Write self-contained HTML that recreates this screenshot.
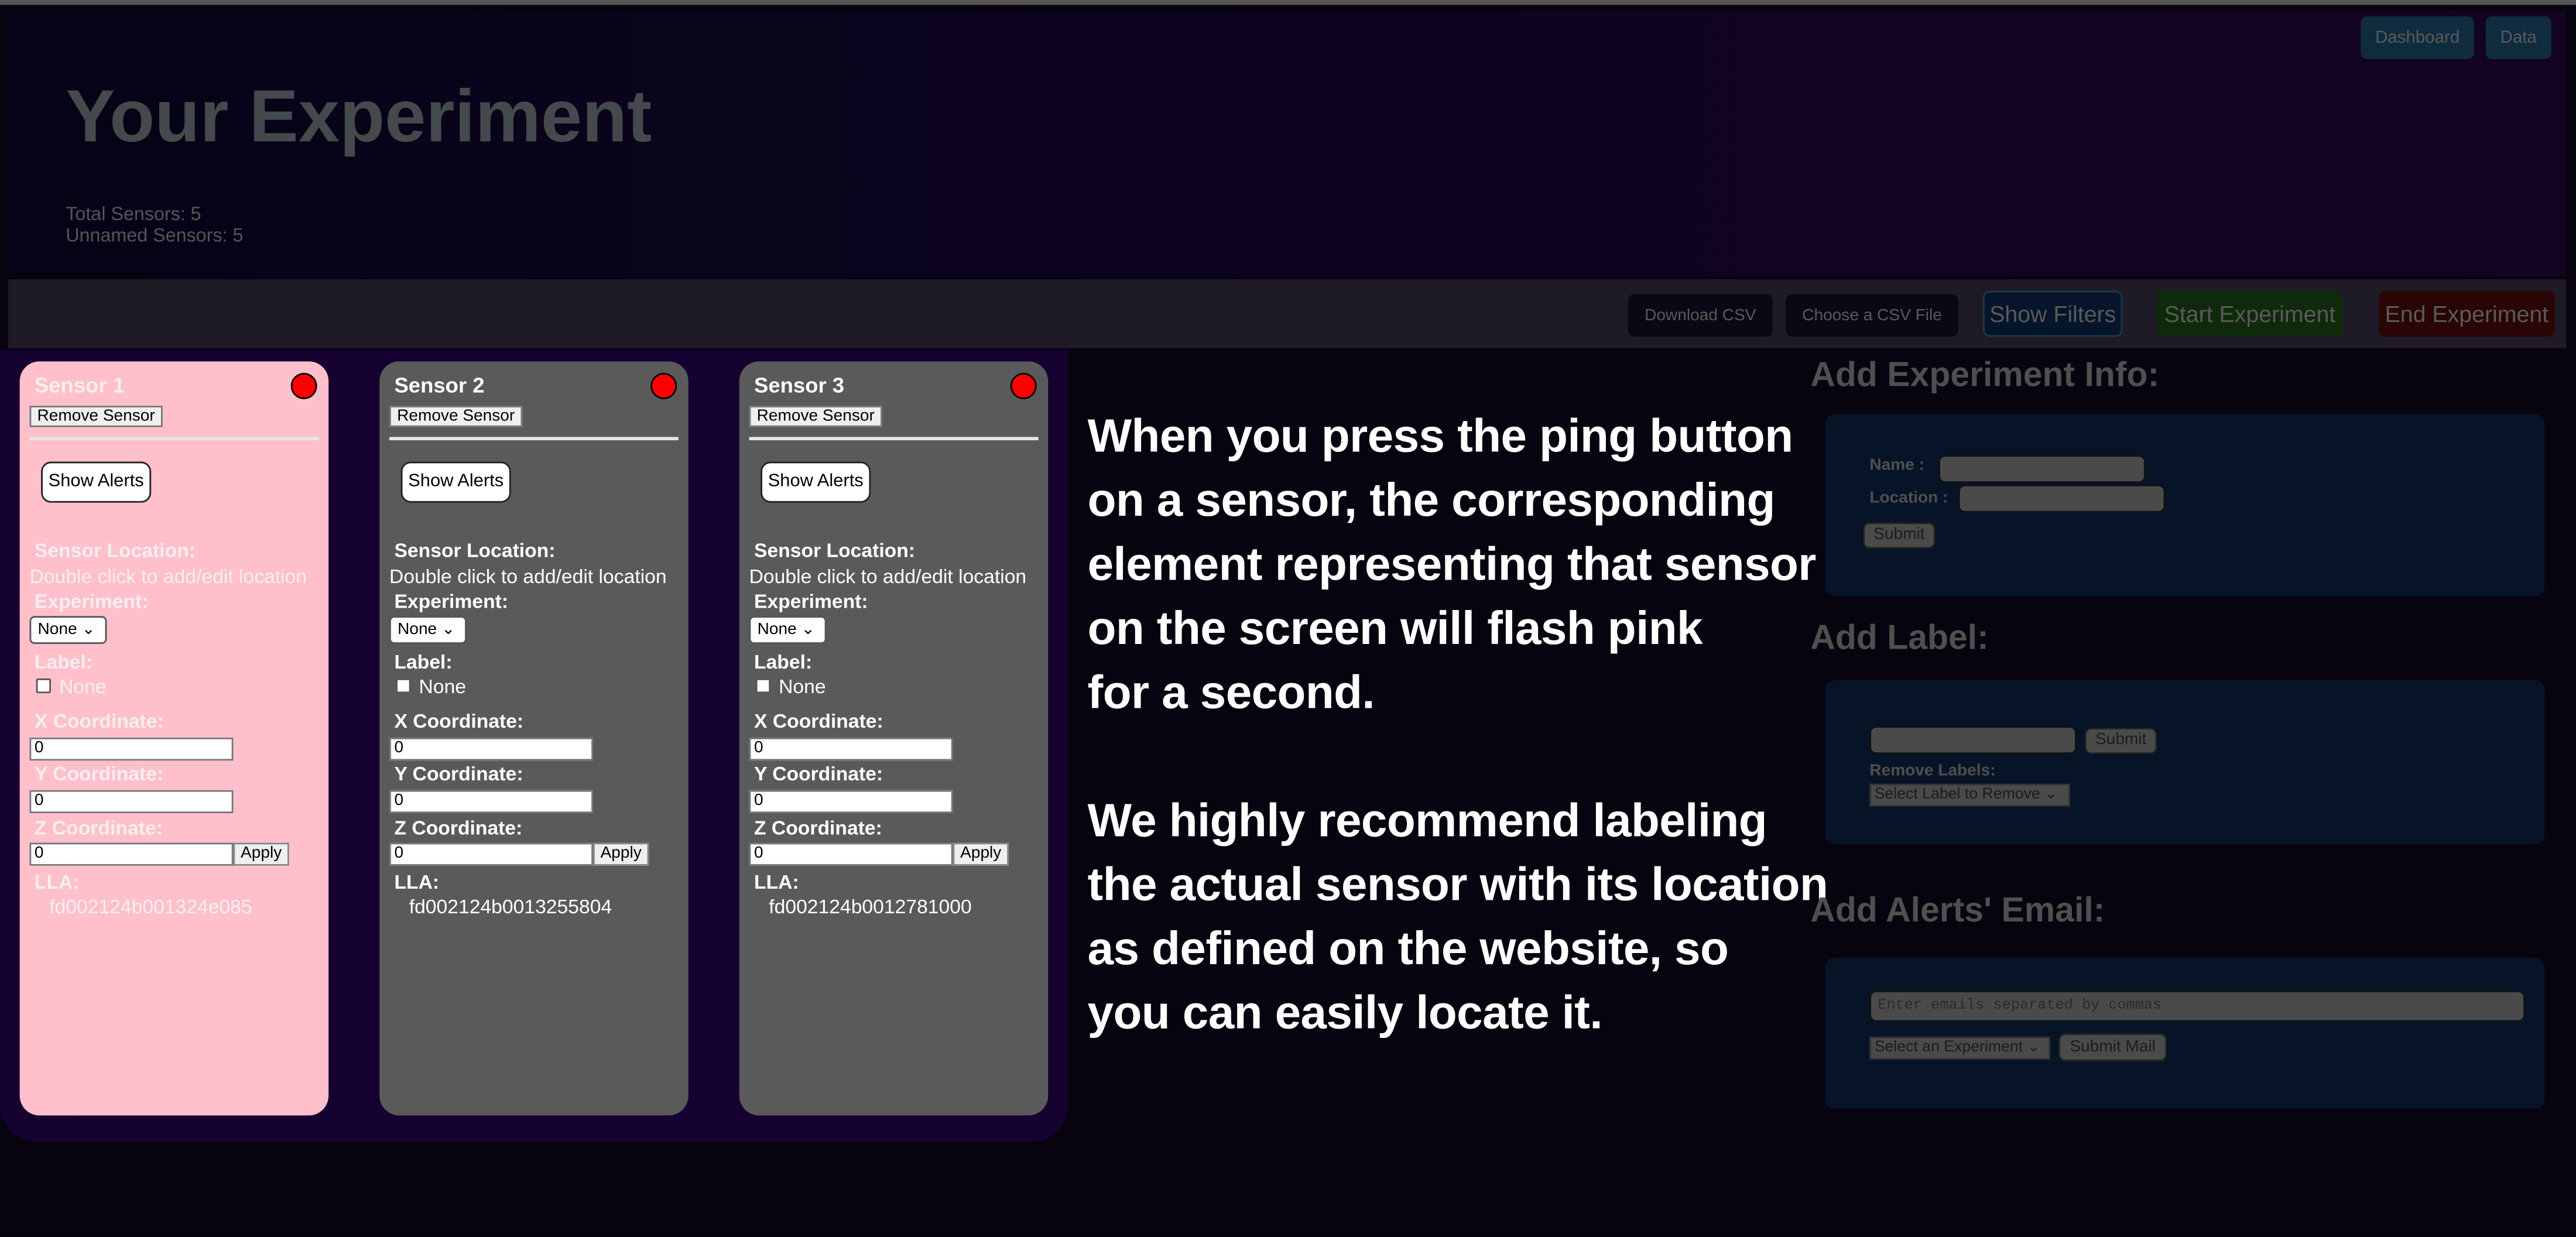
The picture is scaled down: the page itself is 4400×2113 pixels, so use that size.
<!DOCTYPE html>
<html><head><meta charset="utf-8"><style>
*{box-sizing:border-box;margin:0;padding:0}
html,body{width:4400px;height:2113px;overflow:hidden;background:#07030f}
#w{position:absolute;left:0;top:0;width:1568px;height:753px;transform:scale(2.8061);transform-origin:0 0;font-family:"Liberation Sans",sans-serif;background:#07030f}
.a{position:absolute}
.hdr{left:5px;top:7px;width:1557px;height:161px;background:linear-gradient(90deg,#050316 0%,#0d0420 45%,#130421 100%)}
.tb{left:5px;top:170px;width:1557px;height:42px;background:#1e1b26}
.btn{position:absolute;border-radius:4px;color:#5a5a5a;font-size:10px;display:flex;align-items:center;justify-content:center}
.big{font-size:14px}
.cont{left:0;top:213px;width:650px;height:482px;background:#150230;border-radius:0 0 22px 22px}
.card{position:absolute;top:220px;width:188px;height:459px;border-radius:12px;color:#fff;font-size:12px}
.card .t{position:absolute;left:9px;top:7px;font-weight:bold;font-size:13px}
.dot{position:absolute;left:165px;top:7px;width:16px;height:16px;border-radius:50%;background:#f00;border:1px solid #000}
.rm{position:absolute;left:6px;top:27px;width:81px;height:13px;background:#efefef;border:1px solid #777;color:#000;font-size:10px;line-height:11px;text-align:center}
.hr{position:absolute;left:6px;top:46px;width:176px;height:2px;background:#e6e6e6}
.sa{position:absolute;left:13px;top:61px;width:67px;height:25px;background:#fff;border:1px solid #222;border-radius:6px;color:#000;font-size:11px;line-height:23px;text-align:center}
.l{position:absolute;left:9px;font-weight:bold;font-size:12px}
.n{position:absolute;left:6px;font-size:12px}
.sel{position:absolute;left:6px;top:155px;width:47px;height:17px;background:#fff;border:1px solid #555;border-radius:3px;color:#000;font-size:10px;padding-left:4px;line-height:15px}
.cb{position:absolute;left:10px;top:193px;width:9px;height:9px;background:#fff;border:1px solid #555;border-radius:1px}
.in{position:absolute;left:6px;width:124px;height:14px;background:#fff;border:1px solid #777;color:#000;font-size:10px;line-height:12px;padding-left:2px}
.ap{position:absolute;left:130px;top:293px;width:34px;height:14px;background:#efefef;border:1px solid #888;color:#000;font-size:10px;line-height:12px;text-align:center}
.txt{left:662px;color:#fff;font-weight:bold;font-size:28.5px;white-space:nowrap;letter-spacing:-0.2px}
.h{color:#4f4f4f;font-weight:bold;font-size:21px;left:1102px}
.box{left:1111px;width:438px;background:#071427;border-radius:6px}
.lb{color:#4f4f4f;font-size:10px;font-weight:bold;position:absolute}
.inp{position:absolute;background:#4a4a4a;border:1px solid #111;border-radius:4px}
.gb{position:absolute;background:#4a4a4a;border:1px solid #222;border-radius:4px;color:#1c1c1c;font-size:10px;text-align:center}
.gs{position:absolute;background:#4a4a4a;border:1px solid #333;color:#1c1c1c;font-size:9.5px;padding-left:2px;white-space:nowrap}
</style></head><body><div id="w">
<div class="a" style="left:0;top:0;width:1568px;height:3px;background:#555"></div>
<div class="a hdr"></div>
<div class="a" style="left:40px;top:45px;font-size:45px;font-weight:bold;color:#444a4c">Your Experiment</div>
<div class="a" style="left:40px;top:125px;font-size:11.5px;color:#555;line-height:13px">Total Sensors: 5<br>Unnamed Sensors: 5</div>
<div class="btn" style="left:1437px;top:10px;width:69px;height:26px;background:#0f2c3f;font-size:10.5px">Dashboard</div>
<div class="btn" style="left:1513px;top:10px;width:40px;height:26px;background:#0f2c3f;font-size:10.5px">Data</div>
<div class="a tb"></div>
<div class="btn" style="left:991px;top:179px;width:88px;height:26px;background:#0a0814">Download CSV</div>
<div class="btn" style="left:1087px;top:179px;width:105px;height:26px;background:#0a0814">Choose a CSV File</div>
<div class="btn big" style="left:1207px;top:177px;width:85px;height:28px;background:#06152a;border:1px solid #1c3a4c">Show Filters</div>
<div class="btn big" style="left:1313px;top:177px;width:113px;height:28px;background:#0f2a0b">Start Experiment</div>
<div class="btn big" style="left:1448px;top:177px;width:107px;height:28px;background:#2a0505">End Experiment</div>
<div class="a cont"></div>

<div class="card" style="left:12px;background:#ffc0cb;color:#f6eeee">
<div class="t">Sensor 1</div><div class="dot"></div><div class="rm">Remove Sensor</div><div class="hr"></div><div class="sa">Show Alerts</div>
<div class="l" style="top:108px">Sensor Location:</div><div class="n" style="top:124px">Double click to add/edit location</div>
<div class="l" style="top:139px">Experiment:</div><div class="sel">None ⌄</div>
<div class="l" style="top:176px">Label:</div><div class="cb"></div><div class="n" style="left:24px;top:191px">None</div>
<div class="l" style="top:212px">X Coordinate:</div><div class="in" style="top:229px">0</div>
<div class="l" style="top:244px">Y Coordinate:</div><div class="in" style="top:261px">0</div>
<div class="l" style="top:277px">Z Coordinate:</div><div class="in" style="top:293px">0</div><div class="ap">Apply</div>
<div class="l" style="top:310px">LLA:</div><div class="n" style="left:18px;top:325px">fd002124b001324e085</div>
</div>
<div class="card" style="left:231px;background:#5a5a5a">
<div class="t">Sensor 2</div><div class="dot"></div><div class="rm">Remove Sensor</div><div class="hr"></div><div class="sa">Show Alerts</div>
<div class="l" style="top:108px">Sensor Location:</div><div class="n" style="top:124px">Double click to add/edit location</div>
<div class="l" style="top:139px">Experiment:</div><div class="sel">None ⌄</div>
<div class="l" style="top:176px">Label:</div><div class="cb"></div><div class="n" style="left:24px;top:191px">None</div>
<div class="l" style="top:212px">X Coordinate:</div><div class="in" style="top:229px">0</div>
<div class="l" style="top:244px">Y Coordinate:</div><div class="in" style="top:261px">0</div>
<div class="l" style="top:277px">Z Coordinate:</div><div class="in" style="top:293px">0</div><div class="ap">Apply</div>
<div class="l" style="top:310px">LLA:</div><div class="n" style="left:18px;top:325px">fd002124b0013255804</div>
</div>
<div class="card" style="left:450px;background:#5a5a5a">
<div class="t">Sensor 3</div><div class="dot"></div><div class="rm">Remove Sensor</div><div class="hr"></div><div class="sa">Show Alerts</div>
<div class="l" style="top:108px">Sensor Location:</div><div class="n" style="top:124px">Double click to add/edit location</div>
<div class="l" style="top:139px">Experiment:</div><div class="sel">None ⌄</div>
<div class="l" style="top:176px">Label:</div><div class="cb"></div><div class="n" style="left:24px;top:191px">None</div>
<div class="l" style="top:212px">X Coordinate:</div><div class="in" style="top:229px">0</div>
<div class="l" style="top:244px">Y Coordinate:</div><div class="in" style="top:261px">0</div>
<div class="l" style="top:277px">Z Coordinate:</div><div class="in" style="top:293px">0</div><div class="ap">Apply</div>
<div class="l" style="top:310px">LLA:</div><div class="n" style="left:18px;top:325px">fd002124b0012781000</div>
</div>

<div class="a txt" style="top:250px">When you press the ping button</div>
<div class="a txt" style="top:289px">on a sensor, the corresponding</div>
<div class="a txt" style="top:328px">element representing that sensor</div>
<div class="a txt" style="top:367px">on the screen will flash pink</div>
<div class="a txt" style="top:406px">for a second.</div>
<div class="a txt" style="top:484px">We highly recommend labeling</div>
<div class="a txt" style="top:523px">the actual sensor with its location</div>
<div class="a txt" style="top:562px">as defined on the website, so</div>
<div class="a txt" style="top:601px">you can easily locate it.</div>

<div class="a h" style="top:217px">Add Experiment Info:</div>
<div class="a box" style="top:252px;height:111px">
<div class="lb" style="left:27px;top:26px">Name :</div><div class="inp" style="left:69px;top:25px;width:126px;height:17px"></div>
<div class="lb" style="left:27px;top:46px">Location :</div><div class="inp" style="left:81px;top:43px;width:126px;height:17px"></div>
<div class="gb" style="left:23px;top:66px;width:44px;height:16px;line-height:14px">Submit</div>
</div>
<div class="a h" style="top:377px">Add Label:</div>
<div class="a box" style="top:414px;height:100px">
<div class="inp" style="left:27px;top:28px;width:126px;height:17px"></div>
<div class="gb" style="left:158px;top:29px;width:44px;height:16px;line-height:14px">Submit</div>
<div class="lb" style="left:27px;top:50px">Remove Labels:</div>
<div class="gs" style="left:27px;top:63px;width:122px;height:14px;line-height:12px">Select Label to Remove ⌄</div>
</div>
<div class="a h" style="top:543px">Add Alerts' Email:</div>
<div class="a box" style="top:583px;height:92px">
<div class="inp" style="left:27px;top:20px;width:399px;height:19px;font-family:'Liberation Mono',monospace;font-size:9px;color:#2a2a2a;line-height:17px;padding-left:4px">Enter emails separated by commas</div>
<div class="gs" style="left:27px;top:48px;width:110px;height:14px;line-height:12px">Select an Experiment ⌄</div>
<div class="gb" style="left:142px;top:46px;width:66px;height:17px;line-height:15px">Submit Mail</div>
</div>
</div></body></html>
